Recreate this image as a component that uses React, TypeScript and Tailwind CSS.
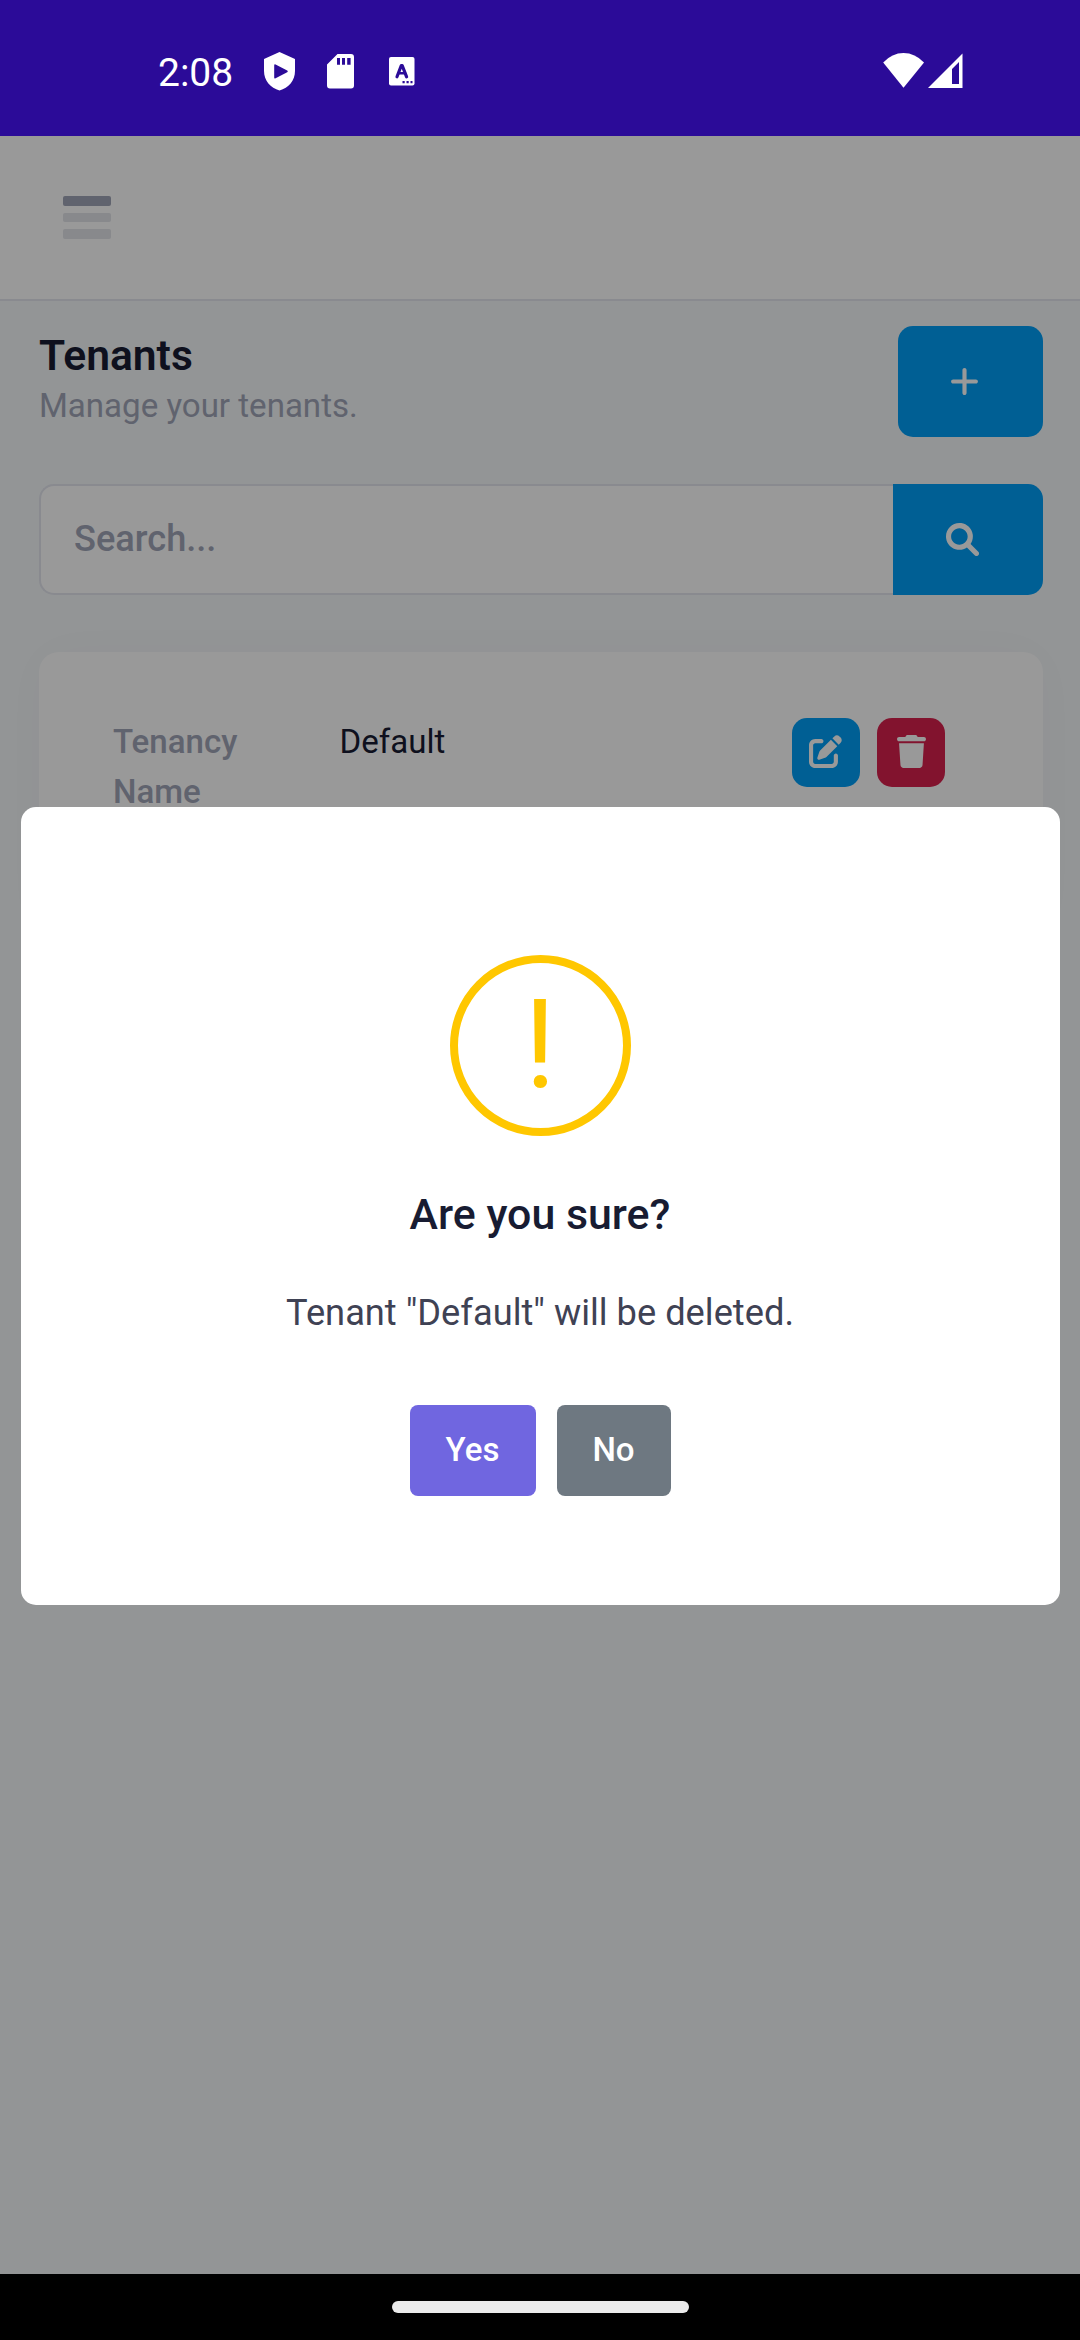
import React from "react";

function Glyph({ d, w, className }: { d: string; w: number; className: string }) {
  return (
    <svg viewBox={`0 0 ${w} 512`} className={className} fill="currentColor">
      <path d={d} />
    </svg>
  );
}

const PLUS =
  "M432 256c0 17.69-14.33 32.01-32 32.01H256v144c0 17.69-14.33 31.99-32 31.99s-32-14.3-32-31.99v-144H48c-17.67 0-32-14.32-32-32.01s14.33-31.99 32-31.99H192v-144c0-17.69 14.33-32.01 32-32.01s32 14.32 32 32.01v144h144C417.7 224 432 238.3 432 256z";
const SEARCH =
  "M500.3 443.7l-119.7-119.7c27.22-40.41 40.65-90.9 33.46-144.7C401.8 87.79 326.8 13.32 235.2 1.723C99.01-15.51-15.51 99.01 1.724 235.2c11.6 91.64 86.08 166.7 177.6 178.9c53.8 7.189 104.3-6.236 144.7-33.46l119.7 119.7c15.62 15.62 40.95 15.62 56.57 0C515.9 484.7 515.9 459.3 500.3 443.7zM79.1 208c0-70.58 57.42-128 128-128s128 57.42 128 128c0 70.58-57.42 128-128 128S79.1 278.6 79.1 208z";
const EDIT =
  "M490.3 40.4C512.2 62.27 512.2 97.73 490.3 119.6L460.3 149.7L362.3 51.72L392.4 21.66C414.3-.2135 449.7-.2135 471.6 21.66L490.3 40.4zM172.4 241.7L339.7 74.34L437.7 172.3L270.3 339.6C264.2 345.8 256.7 350.4 248.4 353.2L159.6 382.8C150.1 385.6 141.5 383.4 135 376.1C128.6 370.5 126.4 361 129.2 352.4L158.8 263.6C161.6 255.3 166.2 247.8 172.4 241.7V241.7zM192 63.1C209.7 63.1 224 78.33 224 95.1C224 113.7 209.7 127.1 192 127.1H96C78.33 127.1 64 142.3 64 159.1V416C64 433.7 78.33 448 96 448H352C369.7 448 384 433.7 384 416V319.1C384 302.3 398.3 287.1 416 287.1C433.7 287.1 448 302.3 448 319.1V416C448 469 405 512 352 512H96C42.98 512 0 469 0 416V159.1C0 106.1 42.98 63.1 96 63.1H192z";
const TRASH =
  "M135.2 17.69C140.6 6.848 151.7 0 163.8 0H284.2C296.3 0 307.4 6.848 312.8 17.69L320 32H416C433.7 32 448 46.33 448 64C448 81.67 433.7 96 416 96H32C14.33 96 0 81.67 0 64C0 46.33 14.33 32 32 32H128L135.2 17.69zM394.8 466.1C393.2 492.3 372.3 512 346.9 512H101.1C75.75 512 54.77 492.3 53.19 466.1L31.1 128H416L394.8 466.1z";

function StatusBar() {
  return (
    <header className="flex h-[136px] shrink-0 items-start bg-[#2b0b98] pl-[158px] pr-[117.5px] text-white">
      <span className="mt-[53px] w-[106px] text-[39px] leading-[40px]">2:08</span>
      <svg viewBox="0 0 31 39" className="mt-[52px] h-[39px] w-[31px]" fill="currentColor">
        <path fillRule="evenodd" d="M15.5 0 31 7V19C31 28.500 24.500 36 15.500 38.500 6.500 36 0 28.500 0 19V7ZM10.200 13.400V25.500Q10.200 27 11.600 26.200L23.200 20.200Q24.600 19.300 23.200 18.500L11.600 12.500Q10.200 12 10.200 13.400Z" />
      </svg>
      <svg viewBox="0 0 27 35" className="mt-[54px] ml-[32px] h-[35px] w-[27px]" fill="currentColor">
        <path fillRule="evenodd" d="M10.500 0H24Q27 0 27 3V31.500Q27 34.500 24 34.500H3Q0 34.500 0 31.500V10.500ZM10 4V10.800H13V4ZM15 4V10.800H18V4ZM20.200 4V10.800H23.600V4Z" />
      </svg>
      <svg viewBox="0 0 26 29" className="mt-[57px] ml-[34.5px] h-[29px] w-[26px]">
        <rect width="25.5" height="28.5" rx="2" fill="#fff" />
        <g fill="none" stroke="#2b0b98" strokeWidth="3.2" strokeLinecap="round" strokeLinejoin="round">
          <path d="M8 19.800 12.300 8.500H13.200L17.600 19.800" />
          <path d="M9.500 16.300H16" strokeWidth="2.6" />
        </g>
        <path d="M13.500 24h2.200v2.200h-2.200ZM17.500 24h2.200v2.200h-2.200ZM21.500 24h2v2.200h-2Z" fill="#2b0b98" />
      </svg>
      <svg viewBox="0 0 42 36" className="mt-[53px] ml-auto h-[36px] w-[42px]" fill="currentColor">
        <path d="M0.200 9.500Q9 0 20.500 0T41 9.500L20.500 34.700Z" />
      </svg>
      <svg viewBox="0 0 35 36" className="mt-[53px] ml-[2.5px] h-[36px] w-[35px]" fill="currentColor">
        <path fillRule="evenodd" d="M34.500 0.500V35H0ZM31 9 24 16V31H31Z" />
      </svg>
    </header>
  );
}

function AppHeader() {
  return (
    <div className="flex h-[165px] shrink-0 flex-col gap-[7px] border-b-2 border-[#e4e6ef] bg-white pl-[63px] pt-[60px]">
      <div className="h-[9.5px] w-[48px] rounded-[2px] bg-[#a1a5b7]" />
      <div className="h-[9.5px] w-[48px] rounded-[2px] bg-[#e3e4e9]" />
      <div className="h-[9.5px] w-[48px] rounded-[2px] bg-[#e3e4e9]" />
    </div>
  );
}

function TenantsPage() {
  return (
    <main className="flex flex-col pl-[39px] pr-[37px] pt-[25px]">
      <div className="flex items-start justify-between">
        <div className="flex flex-col">
          <h1 className="mt-[3px] text-[42.6px] font-semibold leading-[52px] text-[#181c32]">Tenants</h1>
          <p className="mt-[2px] text-[33.07px] leading-[46px] text-[#a1a5b7]">Manage your tenants.</p>
        </div>
        <button className="flex h-[111px] w-[145px] items-center justify-center rounded-[15px] bg-[#009ef7] pr-[12px] text-white">
          <Glyph d={PLUS} w={448} className="h-[33.07px] w-[29px]" />
        </button>
      </div>

      <div className="mt-[47px] flex h-[111px]">
        <div className="flex flex-1 items-center rounded-l-[15px] border-2 border-r-0 border-[#e4e6ef] bg-white pl-[33px] text-[36.2px] font-medium text-[#a1a5b7]">
          Search...
        </div>
        <button className="flex w-[150px] items-center justify-center rounded-r-[15px] bg-[#009ef7] pr-[11px] text-white">
          <Glyph d={SEARCH} w={512} className="size-[33.07px]" />
        </button>
      </div>

      <section className="mt-[57px] flex h-[282px] items-start rounded-[20px] bg-white pl-[74px] pr-[98px] pt-[65px] text-[33.07px] leading-[50px] shadow-[0_0_52px_0_rgba(76,87,125,0.02)]">
        <div className="w-[226.5px] font-medium text-[#a1a5b7]">
          Tenancy
          <br />
          Name
        </div>
        <div className="flex-1 text-[#181c32]">Default</div>
        <div className="mt-px flex gap-[17px] text-white">
          <button className="flex h-[69px] w-[68px] items-center justify-center rounded-[15px] bg-[#009ef7] pb-px">
            <Glyph d={EDIT} w={512} className="size-[33.07px]" />
          </button>
          <button className="flex h-[69px] w-[68px] items-center justify-center rounded-[15px] bg-[#d9214e] pb-px">
            <Glyph d={TRASH} w={448} className="h-[33.07px] w-[29px]" />
          </button>
        </div>
      </section>
    </main>
  );
}

function ConfirmDialog() {
  return (
    <div className="absolute inset-0 flex items-start justify-center bg-black/40 pt-[671px]">
      <div className="flex h-[798px] w-[1039px] flex-col items-center rounded-[15px] bg-white pt-[148px]">
        <div className="flex size-[181px] items-center justify-center rounded-full border-8 border-[#ffc700] pb-[2px] text-[124px] leading-none text-[#ffc700]">
          !
        </div>
        <h2 className="mt-[52px] text-[42.9px] font-medium leading-[52px] text-[#181c32]">Are you sure?</h2>
        <p className="mt-[48px] text-[36.25px] leading-[50px] text-[#3f4254]">Tenant "Default" will be deleted.</p>
        <div className="mt-[67px] flex gap-[21px] text-[33.07px] font-medium text-white">
          <button className="h-[91px] w-[126px] rounded-[8px] bg-[#7066e0] pb-[2px]">Yes</button>
          <button className="h-[91px] w-[114px] rounded-[8px] bg-[#6e7881] pb-[2px]">No</button>
        </div>
      </div>
    </div>
  );
}

export default function App() {
  return (
    <div className="flex h-[2340px] w-[1080px] flex-col overflow-hidden font-['Roboto',sans-serif]">
      <StatusBar />
      <div className="relative flex flex-1 flex-col bg-[#f5f8fa]">
        <AppHeader />
        <TenantsPage />
        <ConfirmDialog />
      </div>
      <footer className="flex h-[66px] shrink-0 justify-center bg-black pt-[27px]">
        <div className="h-[12px] w-[297px] rounded-full bg-[#ebebeb]" />
      </footer>
    </div>
  );
}
